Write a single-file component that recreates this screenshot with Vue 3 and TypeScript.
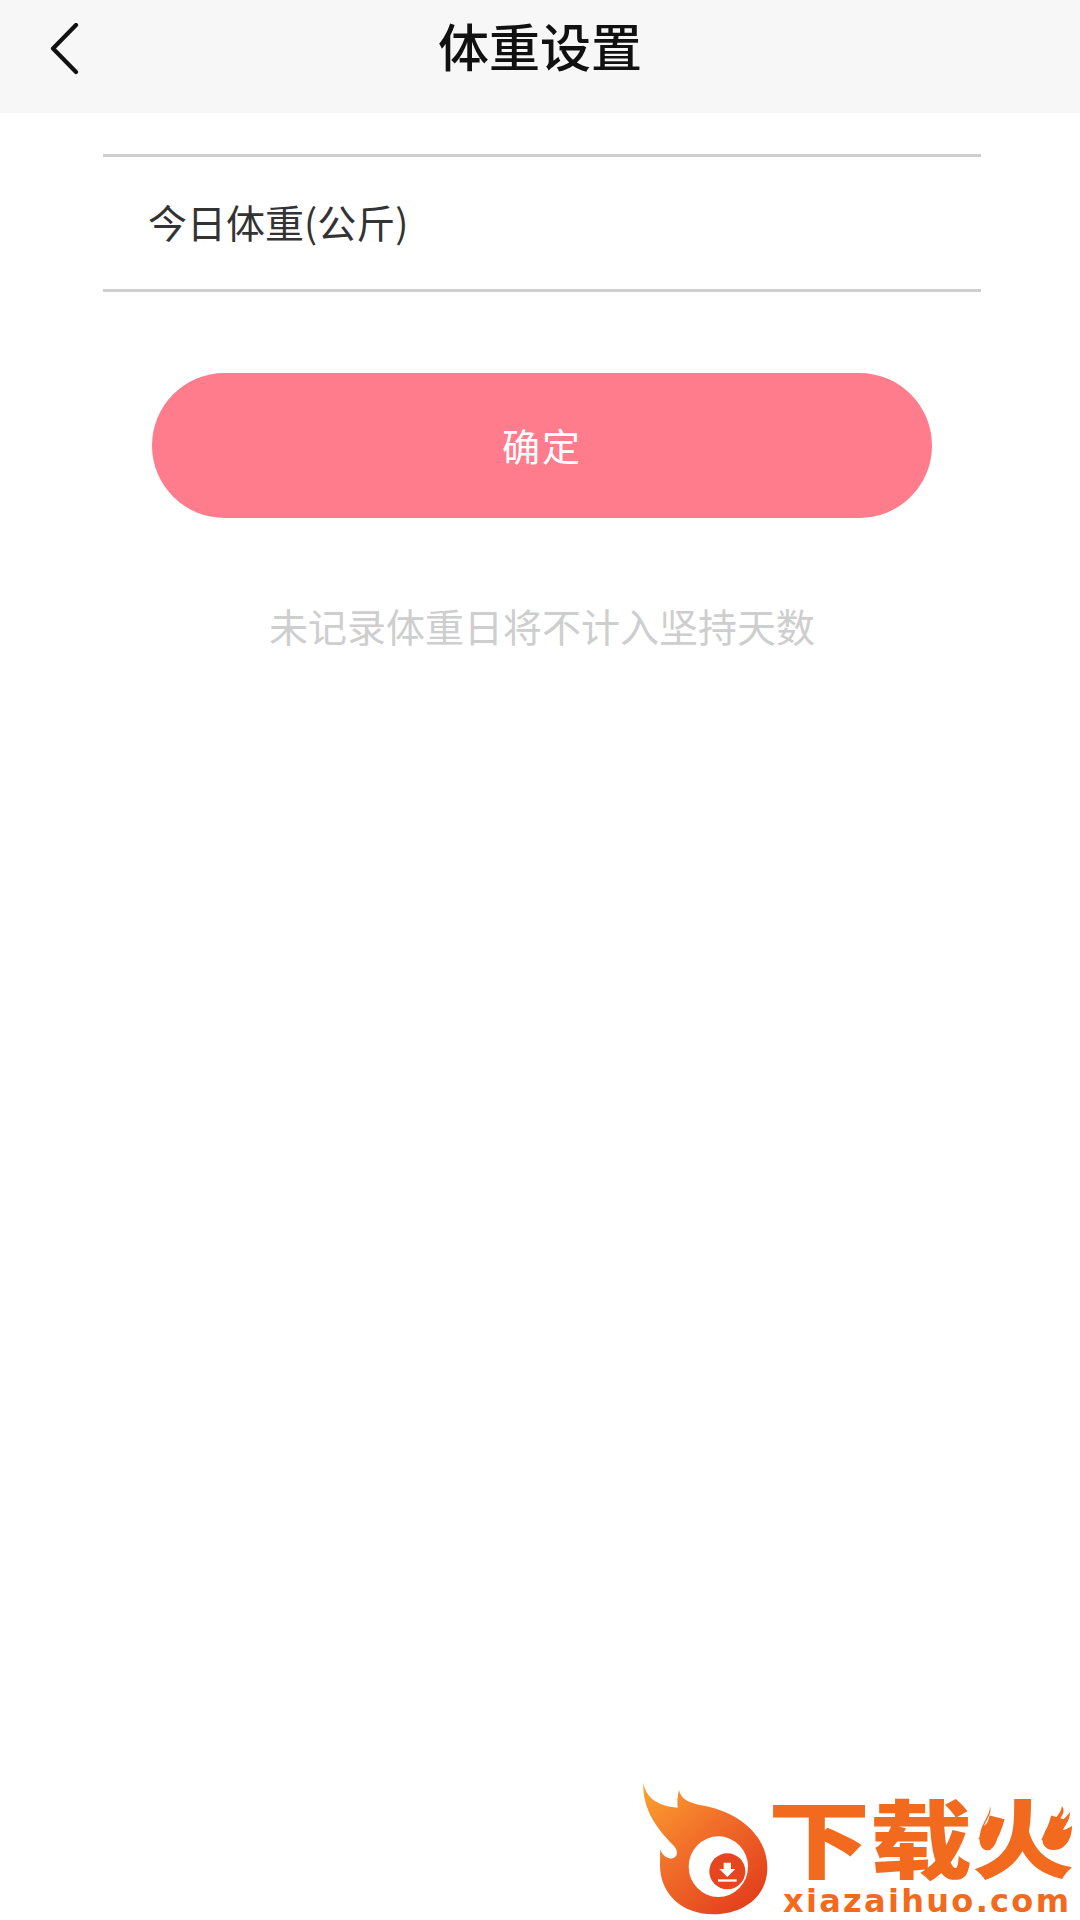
<script setup lang="ts">
const title = "体重设置";
const label = "今日体重(公斤)";
const hint = "未记录体重日将不计入坚持天数";
</script>

<template>
  <div class="page">
    <header class="top-bar">
      <svg class="back" viewBox="0 0 30 54" width="30" height="54">
        <path d="M27 2 L4 25.5 L27 49" fill="none" stroke="#111" stroke-width="4.2" stroke-linecap="round" stroke-linejoin="round" />
      </svg>
      <h1 class="title">{{ title }}</h1>
    </header>

    <main class="content">
      <div class="weight-row">{{ label }}</div>
      <button class="confirm" type="button">确定</button>
      <p class="hint">{{ hint }}</p>
    </main>

    <div class="watermark">
      <svg class="flame" viewBox="0 0 480 450" width="160" height="150">
        <defs>
          <linearGradient id="flameFill" x1="0.05" y1="0" x2="0.85" y2="0.95">
            <stop offset="0" stop-color="#fba12f" />
            <stop offset="0.45" stop-color="#f2702a" />
            <stop offset="1" stop-color="#e23f1c" />
          </linearGradient>
        </defs>
        <path
          d="M40 38 C46 78 78 108 143 113 C141 92 143 76 147 60 C152 84 170 96 205 104 C320 122 412 190 412 295 C412 375 345 433 250 433 C160 433 90 375 90 285 C90 268 91 254 90 238 C100 264 124 274 138 258 C144 248 140 238 132 228 C84 180 36 120 40 38 Z"
          fill="url(#flameFill)"
        />
        <ellipse cx="265" cy="290" rx="89" ry="91" fill="#fff" />
        <circle cx="292" cy="304" r="54" fill="#e5451f" />
        <path d="M281 278 H303 V297 H316 L292 321 L268 297 H281 Z" fill="#fff" />
        <rect x="264" y="328" width="56" height="7" fill="#fff" />
      </svg>
      <div class="brand">
        <div class="brand-name">下载火</div>
        <div class="brand-url">xiazaihuo.com</div>
        <svg class="sparks" viewBox="0 0 100 50" width="100" height="50">
          <path d="M12 0 C14 8 9 12 6 20 C8 18 9 17 11 15 C10 20 12 22 16 16 C20 26 22 36 12 44 C4 46 0 38 2 28 C4 16 12 10 12 0 Z" fill="#f26a1e" />
          <path d="M84 0 C88 6 84 10 78 18 C82 16 86 14 92 6 C92 14 88 18 84 24 C88 24 90 22 94 20 C94 32 88 44 76 44 C66 44 62 36 66 28 C70 16 82 12 84 0 Z" fill="#f26a1e" />
        </svg>
      </div>
    </div>
  </div>
</template>

<style scoped>
.page {
  position: relative;
  width: 1080px;
  height: 1920px;
  background: #fff;
  font-family: "Noto Sans CJK SC", "Liberation Sans", sans-serif;
  overflow: hidden;
}

.top-bar {
  display: flex;
  align-items: flex-start;
  height: 113px;
  padding: 20px 0 0 49px;
  box-sizing: border-box;
  background: #f7f7f7;
}

.back {
  flex: none;
  margin-top: 3px;
}

.title {
  flex: 1;
  margin: -11px 79px 0 0;
  font-size: 51px;
  line-height: 72px;
  font-weight: 500;
  color: #111;
  text-align: center;
}

.content {
  display: flex;
  flex-direction: column;
  padding: 41px 0 0 103px;
}

.weight-row {
  width: 878px;
  height: 138px;
  padding-left: 45px;
  box-sizing: border-box;
  border-top: 3px solid #cfcfcf;
  border-bottom: 3px solid #cfcfcf;
  font-size: 39px;
  line-height: 128px;
  color: #333;
}

.confirm {
  width: 780px;
  height: 145px;
  margin: 81px 0 0 49px;
  padding: 0 0 2px 0;
  border: 0;
  border-radius: 73px;
  background: #ff7c8c;
  color: #fff;
  font-family: inherit;
  font-size: 38px;
  letter-spacing: 2px;
}

.hint {
  margin: 79px 0 0 0;
  width: 878px;
  font-size: 39px;
  line-height: 56px;
  color: #cecece;
  text-align: center;
}

.watermark {
  position: absolute;
  left: 630px;
  top: 1770px;
  display: flex;
}

.flame {
  flex: none;
}

.brand {
  position: relative;
  margin-left: -22px;
  color: #f26a1e;
}

.brand-name {
  width: 310px;
  height: 123px;
  font-size: 102px;
  line-height: 108px;
  font-weight: 900;
  transform: scaleY(0.84);
  transform-origin: 0 100%;
}

.brand-url {
  margin: -6px 0 0 15px;
  font-family: "DejaVu Sans", sans-serif;
  font-size: 32px;
  line-height: 28px;
  font-weight: 700;
  letter-spacing: 2.3px;
  white-space: nowrap;
}

.sparks {
  position: absolute;
  left: 210px;
  top: 36px;
}
</style>
